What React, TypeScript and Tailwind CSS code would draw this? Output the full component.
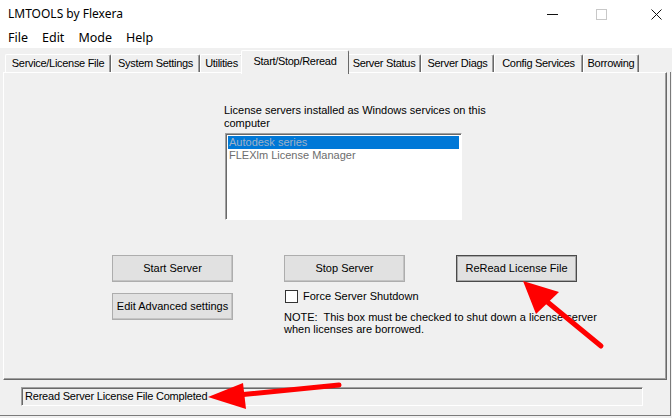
import React from "react";

const tabs = [
  { label: "Service/License File", w: "w-[106px]" },
  { label: "System Settings", w: "w-[89px]" },
  { label: "Utilities", w: "w-[43px]" },
  { label: "Start/Stop/Reread", w: "w-[108px]", sel: true },
  { label: "Server Status", w: "w-[74px]" },
  { label: "Server Diags", w: "w-[73px]" },
  { label: "Config Services", w: "w-[89px]" },
  { label: "Borrowing", w: "w-[56px]" },
];

function Btn({ children, def }: { children: React.ReactNode; def?: boolean }) {
  return (
    <div
      className={
        "w-[121px] h-[27px] flex items-center justify-center bg-[#e1e1e1] text-[11px] text-black whitespace-nowrap " +
        (def
          ? "border border-[#4a4a4a] shadow-[inset_0_0_0_1px_#a8a8a8]"
          : "border border-[#adadad] shadow-[inset_-1px_-1px_0_#c4c4c4]")
      }
    >
      {children}
    </div>
  );
}

export default function App() {
  return (
    <div className="w-[672px] h-[418px] bg-white flex flex-col relative overflow-hidden font-['Liberation_Sans',Arial,sans-serif] text-[11px] text-black">
      {/* title bar */}
      <div className="h-[28px] flex items-center justify-between pl-[8px] pr-[10px] font-['Noto_Sans',sans-serif]">
        <span className="text-[12px] leading-none">LMTOOLS by Flexera</span>
        <div className="flex items-center">
          <svg width="11" height="11" viewBox="0 0 11 11">
            <line x1="0" y1="5.5" x2="11" y2="5.5" stroke="#111" strokeWidth="1" />
          </svg>
          <svg className="ml-[38px]" width="11" height="11" viewBox="0 0 11 11">
            <rect x="0.5" y="0.5" width="10" height="10" fill="none" stroke="#c8c8c8" strokeWidth="1" />
          </svg>
          <svg className="ml-[44px]" width="11" height="11" viewBox="0 0 11 11">
            <path d="M0.5 0.5 L10.5 10.5 M10.5 0.5 L0.5 10.5" stroke="#111" strokeWidth="1" />
          </svg>
        </div>
      </div>
      {/* menu bar */}
      <div className="h-[20px] flex items-center pl-[8px] gap-[14px] font-['Noto_Sans',sans-serif] text-[12.5px] leading-none">
        <span>File</span>
        <span>Edit</span>
        <span>Mode</span>
        <span>Help</span>
      </div>
      {/* client */}
      <div className="flex-1 bg-[#f0f0f0] flex flex-col">
        <div className="h-[24px] pl-[5px] flex items-end relative z-10 tracking-[-0.3px]">
          {tabs.map((t) =>
            t.sel ? (
              <div
                key={t.label}
                className={`${t.w} h-[24px] -mb-[2px] -mx-[2px] relative z-10 bg-[#f0f0f0] border-t border-l border-white border-r border-r-[#696969] rounded-t-[2px] flex items-center justify-center pb-[3px] whitespace-nowrap`}
              >
                {t.label}
              </div>
            ) : (
              <div
                key={t.label}
                className={`${t.w} h-[18px] bg-[#f0f0f0] border-t border-l border-white border-r border-r-[#696969] shadow-[inset_-1px_0_0_#a0a0a0] rounded-t-[2px] flex items-center justify-center whitespace-nowrap`}
              >
                {t.label}
              </div>
            )
          )}
        </div>
        <div className="w-[671px] h-[344px] border-r border-b border-[#7a7a7a] pl-[3px] flex flex-col">
          {/* panel */}
          <div className="w-[664px] h-[308px] border-t border-l border-white border-r border-b border-r-[#696969] border-b-[#696969] shadow-[inset_-1px_-1px_0_#a0a0a0] flex flex-col">
            <div className="pl-[220px] pt-[31px] flex flex-col">
              <div className="leading-[13px]">
                License servers installed as Windows services on this
                <br />
                computer
              </div>
              <div className="mt-[3px] ml-[1px] w-[237px] h-[87px] bg-white border-t border-l border-[#a0a0a0] border-r border-b border-r-white border-b-white shadow-[inset_1px_1px_0_#696969] p-[2px]">
                <div className="h-[13px] bg-[#0078d7] text-[#9fb2c8] leading-[13px] pl-[1px]">Autodesk series</div>
                <div className="h-[13px] text-[#6d6d6d] leading-[13px] pl-[1px]">FLEXlm License Manager</div>
              </div>
            </div>
            <div className="mt-[35px] pl-[108px] flex">
              <div className="w-[172px] flex flex-col gap-[11px]">
                <Btn>Start Server</Btn>
                <Btn>Edit Advanced settings</Btn>
              </div>
              <div className="w-[172px] flex flex-col">
                <Btn>Stop Server</Btn>
                <div className="mt-[8px] h-[13px] flex items-center ml-[1px]">
                  <div className="w-[13px] h-[13px] border border-[#333] bg-white" />
                  <span className="ml-[5px] leading-none">Force Server Shutdown</span>
                </div>
                <div className="mt-[8px] leading-[12px] whitespace-nowrap">
                  NOTE:&nbsp; This box must be checked to shut down a license server
                  <br />
                  when licenses are borrowed.
                </div>
              </div>
              <div className="flex flex-col">
                <Btn def>ReRead License File</Btn>
              </div>
            </div>
          </div>
          {/* status */}
          <div className="ml-[18px] mt-[7px] w-[622px] h-[19px] border-t border-l border-[#a0a0a0] border-r border-b border-r-white border-b-white shadow-[inset_1px_1px_0_#696969] flex items-center pl-[3px] leading-none tracking-[-0.2px]">
            Reread Server License File Completed
          </div>
        </div>
      </div>
      {/* red annotation arrows */}
      <svg className="absolute inset-0 pointer-events-none z-20" width="672" height="418" viewBox="0 0 672 418">
        <line x1="601" y1="346" x2="545" y2="300" stroke="#ff0000" strokeWidth="5" strokeLinecap="round" />
        <polygon points="523,281 559,292 536,314" fill="#ff0000" />
        <line x1="339" y1="385" x2="238" y2="395" stroke="#ff0000" strokeWidth="5" strokeLinecap="round" />
        <polygon points="208,397 243,383 246,409" fill="#ff0000" />
      </svg>
    </div>
  );
}
